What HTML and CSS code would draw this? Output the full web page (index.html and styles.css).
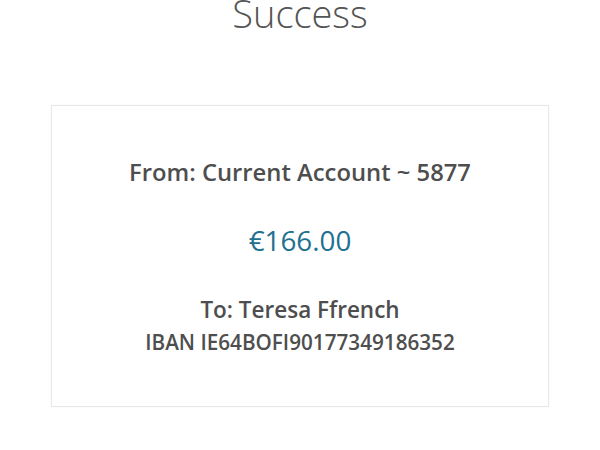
FILE: index.html
```html
<!DOCTYPE html>
<html>
<head>
<meta charset="utf-8">
<link rel="stylesheet" href="styles.css">
</head>
<body>
<div class="page">
  <h1 class="title">Success</h1>
  <div class="card">
    <div class="from">From: Current Account ~ 5877</div>
    <div class="amount">€166.00</div>
    <div class="to">To: Teresa Ffrench</div>
    <div class="iban">IBAN IE64BOFI90177349186352</div>
  </div>
</div>
</body>
</html>
```
FILE: styles.css
```css
html, body {
  margin: 0;
  padding: 0;
  background: #ffffff;
  font-family: "Open Sans", "Noto Sans", sans-serif;
}
.page {
  width: 600px;
  height: 450px;
  overflow: hidden;
  display: flex;
  flex-direction: column;
  align-items: center;
}
.title {
  margin: -12px 0 0 0;
  font-size: 38px;
  font-weight: 300;
  color: #555555;
  line-height: 50px;
}
.card {
  margin-top: 67px;
  width: 496px;
  height: 300px;
  border: 1px solid #e8e8e8;
  box-shadow: 0 0 1px #eeeeee;
  display: flex;
  flex-direction: column;
  align-items: center;
  box-sizing: content-box;
}
.from {
  margin-top: 51px;
  font-size: 23.8px;
  font-weight: 600;
  color: #4e4e4e;
  line-height: 30px;
}
.amount {
  margin-top: 36px;
  font-size: 27.8px;
  font-weight: 400;
  color: #21708f;
  line-height: 34px;
}
.to {
  margin-top: 38px;
  font-size: 22.5px;
  font-weight: 600;
  color: #4e4e4e;
  line-height: 30px;
}
.iban {
  margin-top: 3px;
  font-size: 20.7px;
  font-weight: 600;
  color: #4e4e4e;
  line-height: 28px;
}
```
